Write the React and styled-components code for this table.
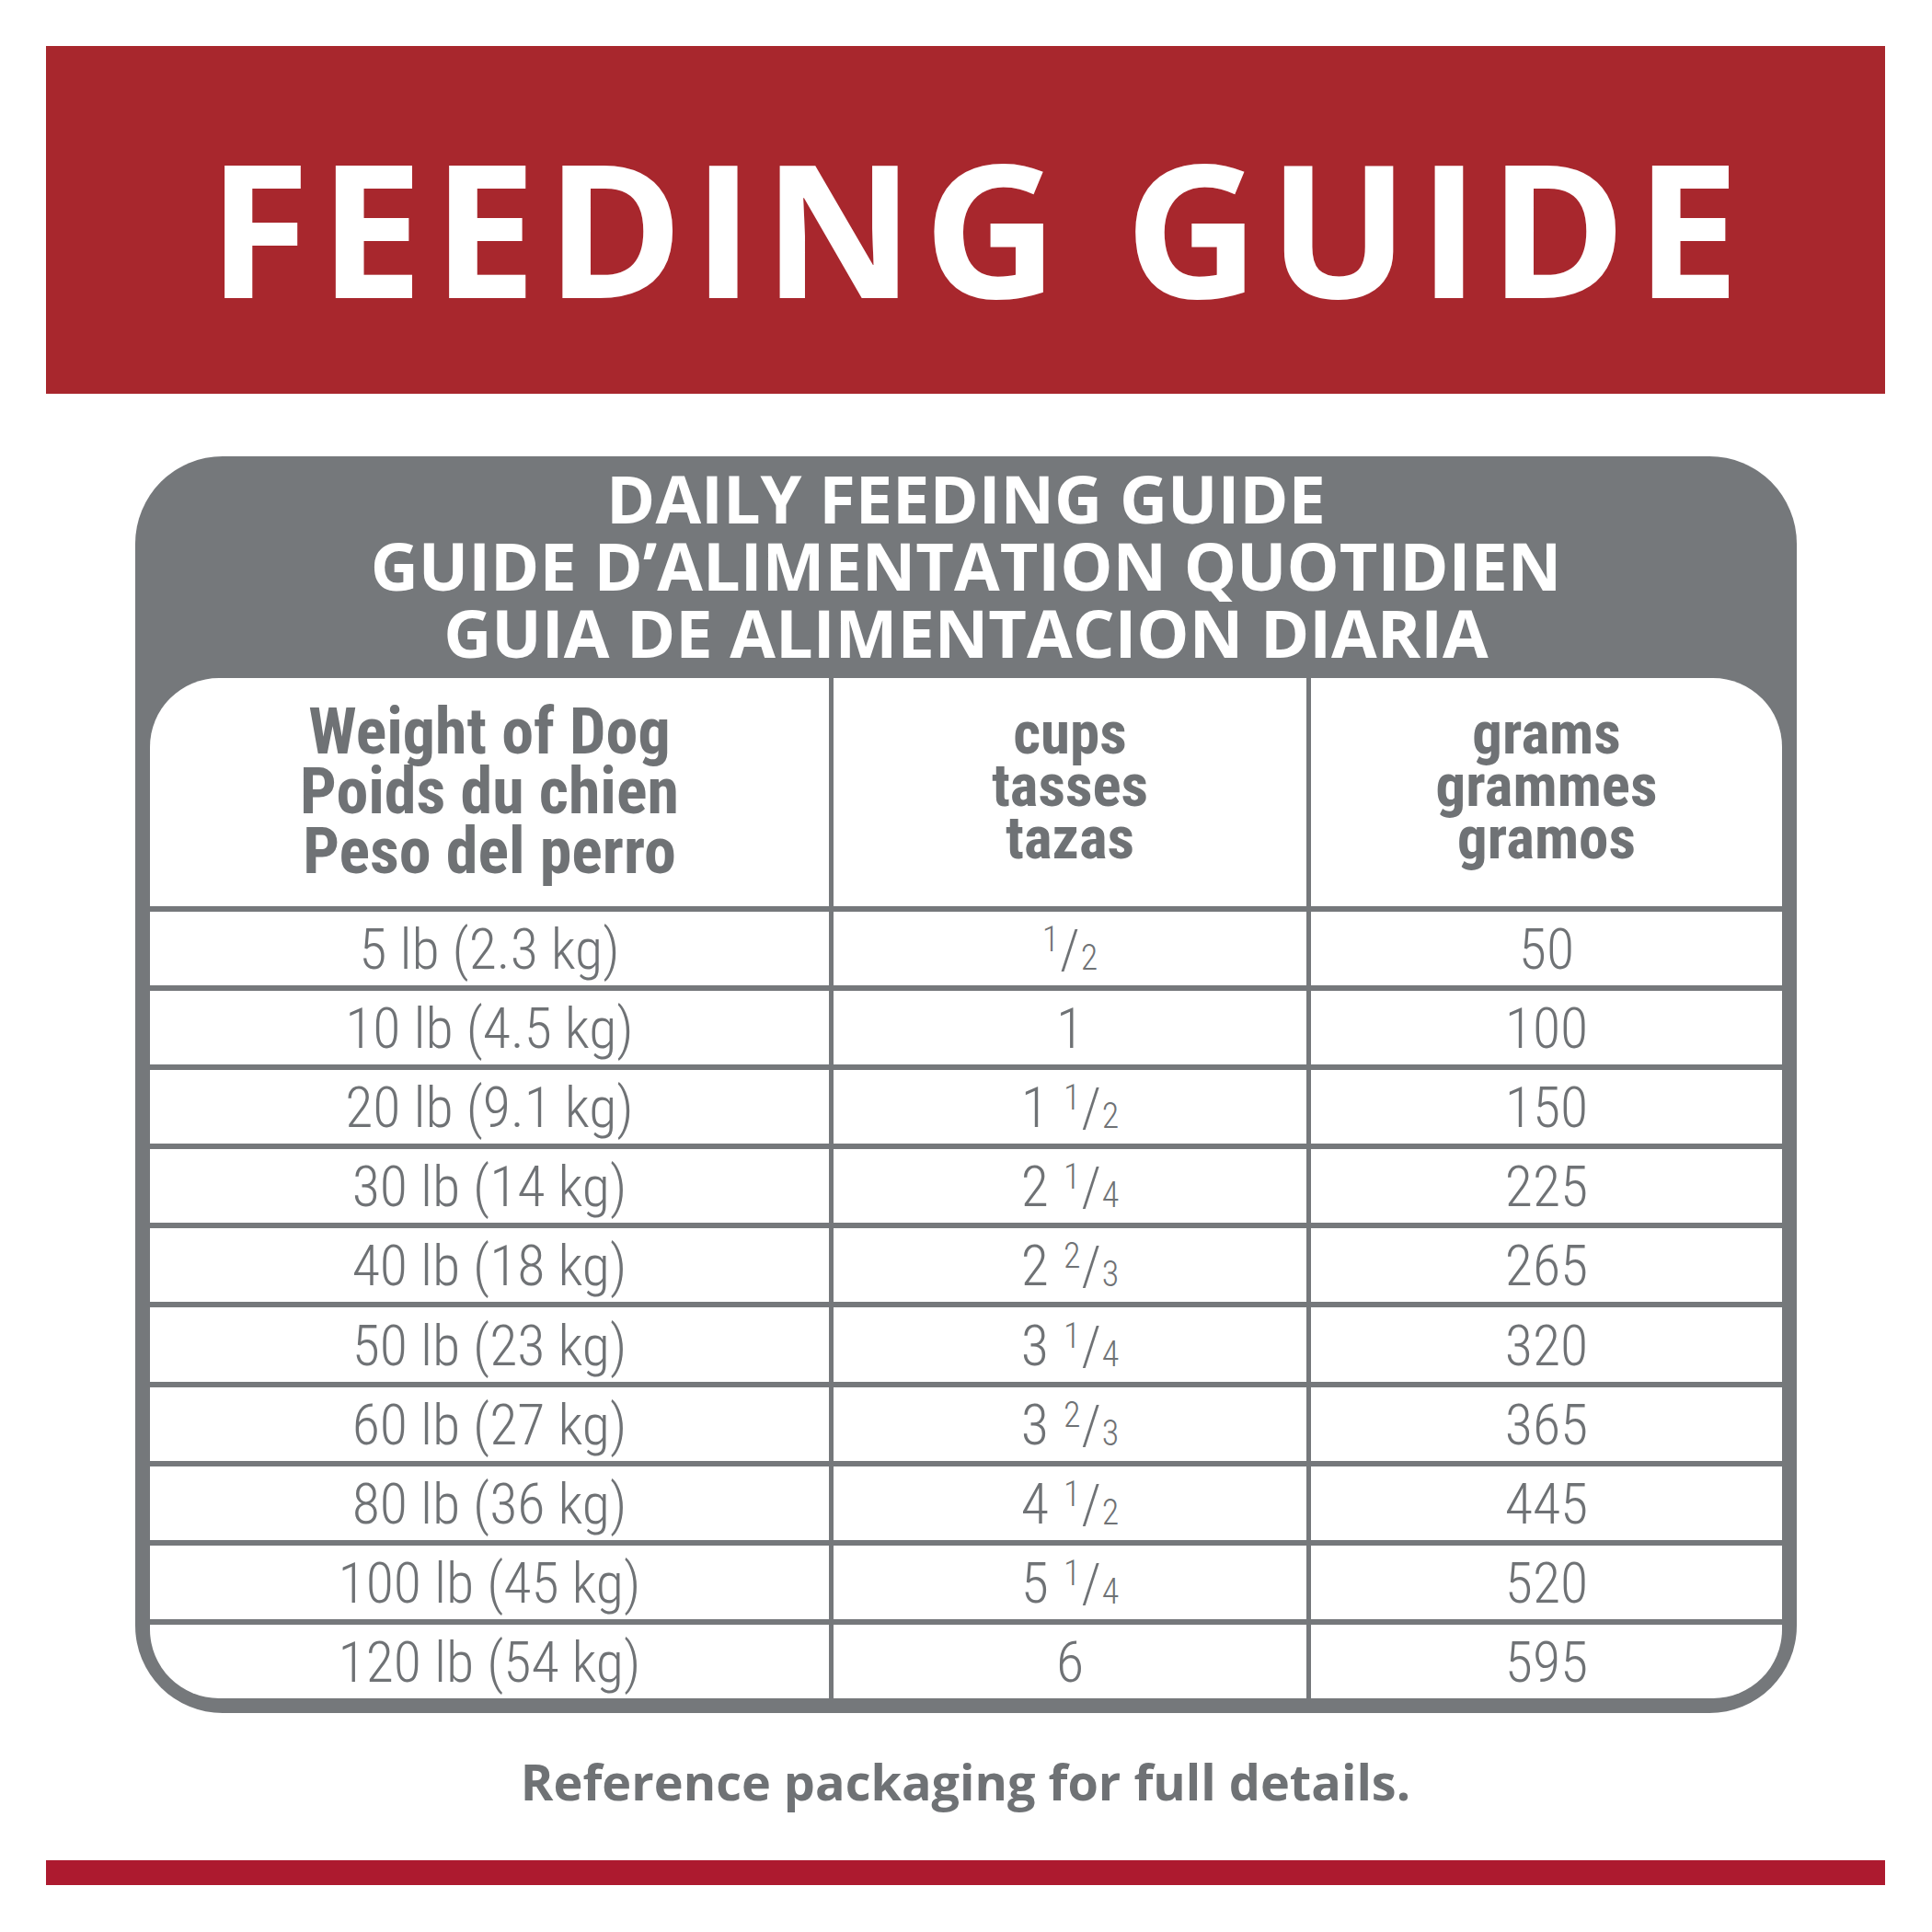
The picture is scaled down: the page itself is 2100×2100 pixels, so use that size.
import React from "react";
import styled, { createGlobalStyle } from "styled-components";

const GlobalStyle = createGlobalStyle`
* {
  margin: 0;
  padding: 0;
  box-sizing: border-box;
}

body {
  background: #ffffff;
  font-family: "Open Sans", "Liberation Sans", sans-serif;
}
`;

const GRAY = "#75787b";
const INK = "#6f7275";
const NARROW = `"Liberation Sans Narrow", "Arial Narrow", "Roboto Condensed", "DejaVu Sans Condensed", sans-serif`;

const Page = styled.div`
  width: 2100px;
  height: 2100px;
  padding: 50px 51px 51px 50px;
  display: flex;
  flex-direction: column;
  background: #ffffff;
`;

const Banner = styled.div`
  height: 378px;
  background: #a8272d;
  display: flex;
  align-items: center;
  justify-content: center;
  padding-top: 14px;
  padding-left: 28px;
`;

const Title = styled.h1`
  color: #ffffff;
  font-family: "Open Sans", sans-serif;
  font-weight: 700;
  font-size: 202px;
  letter-spacing: 10px;
  line-height: 1;
`;

const Card = styled.div`
  margin: 68px 96px 0 97px;
  height: 1366px;
  background: ${GRAY};
  border-radius: 95px;
  padding: 0 16px 16px;
  display: flex;
  flex-direction: column;
`;

const CardHead = styled.div`
  height: 241px;
  display: flex;
  flex-direction: column;
  align-items: center;
  justify-content: center;
  padding-bottom: 4px;
`;

const HeadLine = styled.div`
  color: #ffffff;
  font-family: "Open Sans", sans-serif;
  font-weight: 700;
  font-size: 72px;
  line-height: 73px;
  white-space: nowrap;
`;

const Table = styled.div`
  flex: 1;
  background: #ffffff;
  border-radius: 75px;
  overflow: hidden;
  display: grid;
  grid-template-columns: 738px 519px 1fr;
  grid-template-rows: 248px repeat(10, 1fr);
`;

const HeadCell = styled.div`
  border-left: ${(p) => (p.$first ? "none" : `5px solid ${GRAY}`)};
  display: flex;
  flex-direction: column;
  align-items: center;
  padding-top: ${(p) => p.$top}px;
  color: ${INK};
  font-family: ${NARROW};
  font-weight: 700;
  font-size: ${(p) => p.$size}px;
  line-height: ${(p) => p.$lh}px;
  text-align: center;
`;

const Cell = styled.div`
  border-top: 6px solid ${GRAY};
  border-left: ${(p) => (p.$first ? "none" : `5px solid ${GRAY}`)};
  display: flex;
  align-items: center;
  justify-content: center;
  color: ${INK};
  font-family: ${NARROW};
  font-weight: 300;
  font-size: 62px;
  line-height: 1;
  padding-top: 2px;
  white-space: pre;
`;

const FracWrap = styled.span`
  display: inline-flex;
  align-items: center;
  margin-left: ${(p) => (p.$spaced ? "16px" : "0")};
`;

const Num = styled.span`
  font-size: 38px;
  position: relative;
  top: -11px;
`;

const Den = styled.span`
  font-size: 38px;
  position: relative;
  top: 9px;
`;

const Slash = styled.span`
  font-size: 60px;
  margin: 0 1px;
`;

const Footer = styled.div`
  flex: 1;
  display: flex;
  align-items: center;
  justify-content: center;
  padding-bottom: 12px;
  color: #6f7275;
  font-family: "Open Sans", sans-serif;
  font-weight: 700;
  font-size: 54px;
`;

const BottomBar = styled.div`
  height: 27px;
  background: #ad1a2f;
`;

const rows = [
  ["5 lb (2.3 kg)", null, "1/2", "50"],
  ["10 lb (4.5 kg)", "1", null, "100"],
  ["20 lb (9.1 kg)", "1", "1/2", "150"],
  ["30 lb (14 kg)", "2", "1/4", "225"],
  ["40 lb (18 kg)", "2", "2/3", "265"],
  ["50 lb (23 kg)", "3", "1/4", "320"],
  ["60 lb (27 kg)", "3", "2/3", "365"],
  ["80 lb (36 kg)", "4", "1/2", "445"],
  ["100 lb (45 kg)", "5", "1/4", "520"],
  ["120 lb (54 kg)", "6", null, "595"],
];

const Fraction = ({ value, spaced }) => {
  const [n, d] = value.split("/");
  return (
    <FracWrap $spaced={spaced}>
      <Num>{n}</Num>
      <Slash>/</Slash>
      <Den>{d}</Den>
    </FracWrap>
  );
};

const App = () => {
  return (
    <>
      <GlobalStyle />
      <Page>
        <Banner>
          <Title>FEEDING GUIDE</Title>
        </Banner>
        <Card>
          <CardHead>
            <HeadLine>DAILY FEEDING GUIDE</HeadLine>
            <HeadLine>GUIDE D’ALIMENTATION QUOTIDIEN</HeadLine>
            <HeadLine>GUIA DE ALIMENTACION DIARIA</HeadLine>
          </CardHead>
          <Table>
            <HeadCell $first $top={26} $size={70} $lh={65}>
              <span>Weight of Dog</span>
              <span>Poids du chien</span>
              <span>Peso del perro</span>
            </HeadCell>
            <HeadCell $top={32} $size={65} $lh={57}>
              <span>cups</span>
              <span>tasses</span>
              <span>tazas</span>
            </HeadCell>
            <HeadCell $top={32} $size={65} $lh={57}>
              <span>grams</span>
              <span>grammes</span>
              <span>gramos</span>
            </HeadCell>
            {rows.map(([weight, whole, frac, grams]) => (
              <React.Fragment key={weight}>
                <Cell $first>{weight}</Cell>
                <Cell>
                  {whole}
                  {frac && <Fraction value={frac} spaced={!!whole} />}
                </Cell>
                <Cell>{grams}</Cell>
              </React.Fragment>
            ))}
          </Table>
        </Card>
        <Footer>Reference packaging for full details.</Footer>
        <BottomBar />
      </Page>
    </>
  );
};

export default App;
